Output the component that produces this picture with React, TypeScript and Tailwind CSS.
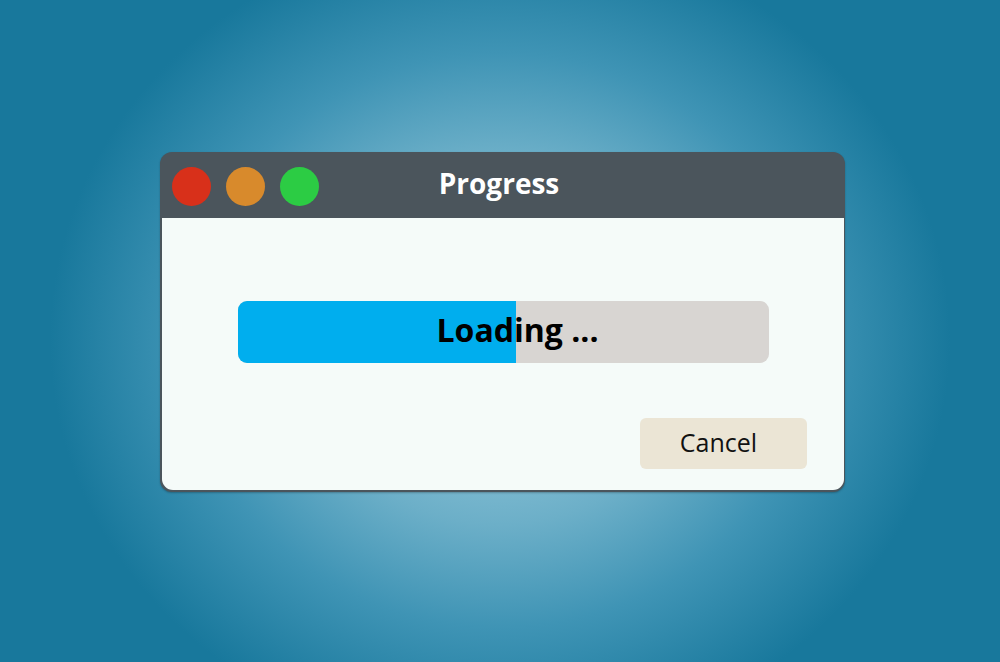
import React from "react";

export default function App() {
  return (
    <div
      className="w-[1000px] h-[662px] overflow-hidden bg-[#18789c] bg-[radial-gradient(ellipse_450px_410px_at_500px_340px,#a9d6e6_0%,#6cafc8_45%,#3f94b5_70%,#18789c_100%)] pl-[160px] pt-[152px]"
      style={{ fontFamily: '"Open Sans", "Noto Sans", sans-serif' }}
    >
      <div className="w-[685px] h-[340px] rounded-[12px] overflow-hidden flex flex-col bg-[#4b555c] shadow-[0_1px_2px_rgba(0,0,0,0.25)]">
        <div className="h-[66px] shrink-0 grid grid-cols-[1fr_auto_1fr] items-center">
          <div className="flex items-center gap-[15px] pl-[12px] pt-[2px]">
            <div className="w-[39px] h-[39px] rounded-full bg-[#d8301a]" />
            <div className="w-[39px] h-[39px] rounded-full bg-[#d88a2c]" />
            <div className="w-[39px] h-[39px] rounded-full bg-[#2ccc44]" />
          </div>
          <div className="text-white font-bold text-[28px] leading-none pr-[7px] pb-[4px]">Progress</div>
          <div />
        </div>
        <div className="flex-1 mx-[1.5px] mb-[2px] rounded-b-[11px] bg-[#f5fbf9] flex flex-col">
          <div className="pt-[83px] pl-[76.5px]">
            <div className="w-[531px] h-[62px] rounded-[9px] overflow-hidden bg-[#d8d5d2] grid">
              <div className="col-start-1 row-start-1 w-[278px] h-full bg-[#00aeee]" />
              <div className="col-start-1 row-start-1 flex items-center justify-center pl-[28px] pb-[5px] text-black font-bold text-[32px] leading-none">
                Loading ...
              </div>
            </div>
          </div>
          <div className="flex justify-end pr-[36.5px] pt-[55px]">
            <div className="w-[167px] h-[51px] rounded-[6px] bg-[#ebe5d5] flex items-center justify-center text-[#111] text-[25px] leading-none pr-[10px] pb-[3px]">
              Cancel
            </div>
          </div>
        </div>
      </div>
    </div>
  );
}
